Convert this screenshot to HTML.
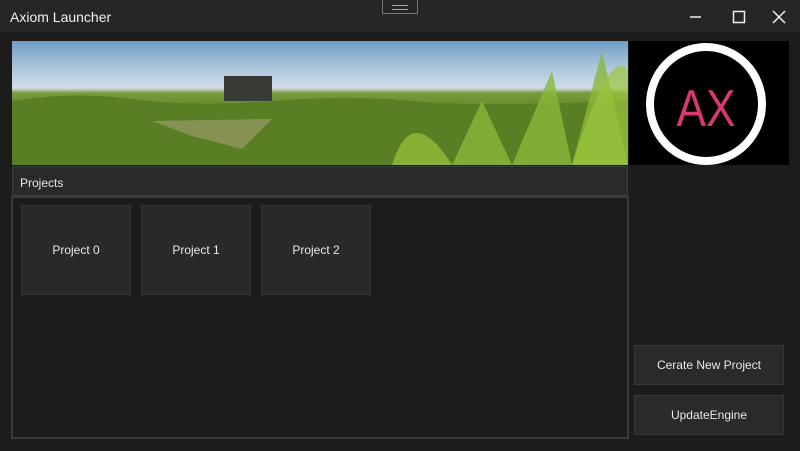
<!DOCTYPE html>
<html><head><style>
*{margin:0;padding:0;box-sizing:border-box}
body{width:800px;height:451px;background:#1c1c1c;font-family:"Liberation Sans",sans-serif;color:#e8e8e8;position:relative;overflow:hidden}
.tb{position:absolute;left:0;top:0;width:800px;height:32px;background:#262626}
.title{position:absolute;left:10px;top:9px;font-size:14px;color:#f0f0f0}
.grip{position:absolute;left:382px;top:0;width:36px;height:14px;border:1px solid #777;border-top:none}
.grip:after{content:"";position:absolute;left:9px;top:5px;width:16px;height:3px;border-top:1px solid #aaa;border-bottom:1px solid #aaa}
.img{position:absolute;left:12px;top:41px;width:616px;height:124px;overflow:hidden;
background:linear-gradient(180deg,#6f9cc4 0%,#a9c4da 20%,#d0dce6 38%,#7a9a3e 42%,#5e8a28 55%,#6b9a2a 75%,#7aa830 100%)}
.logo{position:absolute;left:629px;top:41px;width:160px;height:124px;background:#000}
.hdr{position:absolute;left:12px;top:166px;width:616px;height:30px;background:#2a2a2a;border:1px solid #3a3a3a;font-size:12px;padding:9px 0 0 7px}
.panel{position:absolute;left:11px;top:196px;width:618px;height:243px;border:2px solid #3a3a3a;background:#1c1c1c}
.tile{position:absolute;top:205px;width:110px;height:90px;background:#292929;border:1px solid #353535;font-size:12px;text-align:center;line-height:88px}
.btn{position:absolute;left:634px;width:150px;height:40px;background:#2a2a2a;border:1px solid #383838;font-size:12px;text-align:center;line-height:38px}
</style></head><body>
<div class="tb"><div class="title">Axiom Launcher</div><div class="grip"></div>
<svg style="position:absolute;left:690px;top:8px" width="100" height="18">
<line x1="0" y1="9" x2="11" y2="9" stroke="#eee" stroke-width="1.5"/>
<rect x="43.5" y="3.5" width="11" height="11" fill="none" stroke="#eee" stroke-width="1.5"/>
<path d="M83 3L95 15M95 3L83 15" stroke="#eee" stroke-width="1.5"/></svg></div>
<div class="img">
<svg width="616" height="124" style="position:absolute;left:0;top:0">
<rect x="212" y="35" width="48" height="25" fill="#3a3a36"/>
<path d="M0 60Q60 50 120 58T260 60T400 60T616 60V124H0Z" fill="#587f24"/>
<path d="M140 80L260 78L230 108L180 95Z" fill="#9a9a6a" opacity=".7"/>
<path d="M440 124L470 60L500 124M500 124L540 30L560 124M560 124L590 10L616 124Z" fill="#8ab83a" opacity=".8"/>
<path d="M380 124Q400 60 440 124M560 124Q600 0 616 30V124Z" fill="#9cc43c" opacity=".7"/>
</svg></div>
<div class="logo"><svg width="160" height="124">
<ellipse cx="77" cy="63" rx="56" ry="57" fill="none" stroke="#fff" stroke-width="8"/>
<text x="77" y="85" text-anchor="middle" font-family="Liberation Sans" font-size="52" fill="#d8386f" transform="translate(77 0) scale(0.85 1) translate(-77 0)">AX</text></svg></div>
<div class="hdr">Projects</div>
<div class="panel"></div>
<div class="tile" style="left:21px">Project 0</div>
<div class="tile" style="left:141px">Project 1</div>
<div class="tile" style="left:261px">Project 2</div>
<div class="btn" style="top:345px">Cerate New Project</div>
<div class="btn" style="top:395px">UpdateEngine</div>
</body></html>
